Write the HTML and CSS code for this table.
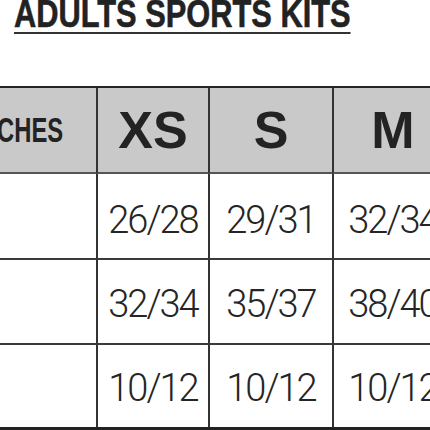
FILE: index.html
```html
<!DOCTYPE html>
<html lang="en">
<head>
<meta charset="utf-8">
<title>Adults Sports Kits</title>
<link rel="stylesheet" href="styles.css">
</head>
<body>
<div class="page">
  <h1 class="title"><span class="title-text">ADULTS SPORTS KITS</span></h1>
  <div class="chart">
    <div class="cell head label"><span class="label-text">INCHES</span></div>
    <div class="cell head size">XS</div>
    <div class="cell head size">S</div>
    <div class="cell head size">M</div>

    <div class="cell row r1 first"></div>
    <div class="cell row r1 num">26/28</div>
    <div class="cell row r1 num">29/31</div>
    <div class="cell row r1 num">32/34</div>

    <div class="cell row r2 first"></div>
    <div class="cell row r2 num">32/34</div>
    <div class="cell row r2 num">35/37</div>
    <div class="cell row r2 num">38/40</div>

    <div class="cell row r3 first"></div>
    <div class="cell row r3 num">10/12</div>
    <div class="cell row r3 num">10/12</div>
    <div class="cell row r3 num">10/12</div>
  </div>
</div>
</body>
</html>
```
FILE: styles.css
```css
html, body {
  margin: 0;
  padding: 0;
  background: #ffffff;
  overflow: hidden;
}
.page {
  width: 430px;
  height: 430px;
  overflow: hidden;
}
.title {
  margin: -4px 0 0 14px;
  padding: 0;
  height: 36px;
  font-family: "Liberation Sans", Arial, sans-serif;
  font-weight: bold;
  font-size: 39px;
  line-height: 36px;
  color: #222222;
  white-space: nowrap;
}
.title-text {
  display: inline-block;
  height: 36px;
  border-bottom: 2px solid #333333;
  -webkit-text-stroke: 0.6px #222222;
  transform: scaleX(0.79);
  transform-origin: left top;
}
.chart {
  display: grid;
  grid-template-columns: 180px 112px 124px 120px;
  grid-template-rows: 86px 86px 85px 82px;
  width: 536px;
  margin: 54px 0 0 -84px;
  border-top: 2px solid #262626;
  border-bottom: 3px solid #222222;
  font-family: "Liberation Sans", Arial, sans-serif;
  color: #232323;
}
.cell {
  box-sizing: border-box;
  display: flex;
  align-items: center;
  justify-content: center;
  border-left: 2px solid #333333;
}
.cell.head.label,
.cell.first {
  border-left: none;
}
.head {
  background: #c9c9c9;
  border-bottom: 2px solid #555555;
}
.size {
  font-weight: bold;
  font-size: 52px;
  line-height: 1;
}
.label {
  justify-content: flex-end;
  padding-right: 33px;
  font-weight: bold;
  font-size: 35px;
}
.label-text {
  display: inline-block;
  transform: scaleX(0.68);
  transform-origin: right center;
}
.row {
  background: #ffffff;
}
.r1, .r2 {
  border-bottom: 2px solid #3a3a3a;
}
.num {
  font-family: Roboto, "Open Sans", sans-serif;
  font-weight: 300;
  font-size: 38px;
  letter-spacing: -2px;
  line-height: 1;
  color: #252525;
}
.r1.num {
  padding-top: 8px;
}
.r2.num {
  padding-top: 4px;
}
.r3.num {
  padding-top: 4px;
}
```
